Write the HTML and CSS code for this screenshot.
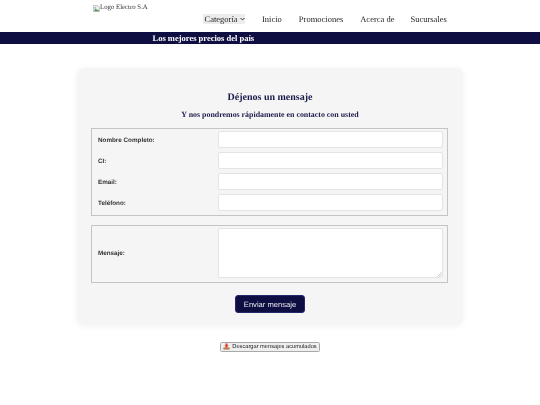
FILE: index.html
```html
<!DOCTYPE html>
<html lang="es">
<head>
<meta charset="utf-8">
<title>Contacto</title>
<link rel="stylesheet" href="styles.css">
</head>
<body>
<div class="page">
<header class="top">
  <div class="logo">
    <svg class="broken" viewBox="0 0 8 8" width="7" height="7"><path d="M.5.5h5l2 2v5h-7z" fill="#e8eef0" stroke="#a0a0a0" stroke-width=".6"/><path d="M1 7l2-3 2 2 1-1 1 2z" fill="#4f9a4a"/><path d="M1 3.500l1.500-1.500 1 1-1 1.500z" fill="#8fb8e0"/></svg><span>Logo Electro S.A</span>
  </div>
  <nav class="nav">
    <span class="cat">Categoría <svg class="chev" viewBox="0 0 8 6" width="5" height="4"><path d="M1 1.500l3 3 3-3" fill="none" stroke="#222" stroke-width="1.500"/></svg></span>
    <a>Inicio</a>
    <a>Promociones</a>
    <a>Acerca de</a>
    <a>Sucursales</a>
  </nav>
</header>
<div class="banner"><span>Los mejores precios del país</span></div>
<main class="card">
  <h2>Déjenos un mensaje</h2>
  <h3>Y nos pondremos rápidamente en contacto con usted</h3>
  <fieldset class="group">
    <div class="row"><label>Nombre Completo:</label><div class="field"></div></div>
    <div class="row"><label>CI:</label><div class="field"></div></div>
    <div class="row"><label>Email:</label><div class="field"></div></div>
    <div class="row"><label>Teléfono:</label><div class="field"></div></div>
  </fieldset>
  <fieldset class="group second">
    <div class="row"><label>Mensaje:</label><div class="field area"><svg class="grip" viewBox="0 0 6 6" width="5" height="5"><path d="M5.500.5l-5 5M5.500 3l-2.500 2.500" stroke="#999" stroke-width=".7"/></svg></div></div>
  </fieldset>
  <div class="send-wrap"><button class="send">Enviar mensaje</button></div>
</main>
<div class="dl-wrap">
  <button class="dl"><svg class="inbox" viewBox="0 0 8 8" width="7" height="7"><path d="M.5 5h7v2.500h-7z" fill="#b9784a"/><path d="M2.800.5h2.400v2.300h1.300L4 5.500 1.500 2.800h1.300z" fill="#d9432f"/></svg><span class="dl-text">Descargar mensajes acumulados</span></button>
</div>
</div>
</body>
</html>
```
FILE: styles.css
```css
* { box-sizing: border-box; }
html, body { margin: 0; padding: 0; background: #fff; }
body { width: 540px; height: 405px; overflow: hidden; }
.page { width: 540px; height: 405px; font-family: "Liberation Serif", serif; color: #222; text-rendering: geometricPrecision; transform: translateZ(0); will-change: transform; }
.top { height: 32px; padding-left: 93px; display: flex; }
.logo { font-size: 6.800px; line-height: 8px; height: 8px; margin-top: 4px; color: #333; display: flex; align-items: center; width: 110px; flex: none; white-space: nowrap; }
.broken { flex: none; }
.nav { display: flex; align-items: center; height: 10px; margin-top: 14px; font-size: 8.500px; color: #222; white-space: nowrap; }
.nav a { margin-left: 17px; }
.nav a:last-child { margin-left: 16px; }
.cat { background: #ececec; height: 10px; line-height: 10px; padding: 0 1px 0 1.500px; width: 42px; display: inline-flex; align-items: center; gap: 2px; }
.chev { flex: none; }
.banner { height: 12px; background: #0e0e42; color: #fff; font-weight: bold; font-size: 8.500px; line-height: 12px; padding-left: 152.500px; white-space: nowrap; }
.card { width: 386px; height: 257px; margin: 24px 0 0 77px; background: #f5f5f5; border-radius: 7px; box-shadow: 0 1px 6px rgba(0,0,0,.06); padding: 23px 14px 0; color: #1a1a4b; }
h2 { margin: 0; font-size: 10px; line-height: 13px; text-align: center; font-weight: bold; }
h3 { margin: 6px 0 0; font-size: 7.900px; line-height: 10px; text-align: center; font-weight: bold; }
.group { border: 1px solid #c4c4c4; border-bottom-width: 1.500px; margin: 8px 0 0; padding: 2px 4.500px 0 6px; width: 357px; height: 88px; display: flex; flex-direction: column; gap: 4px; min-width: 0; }
.second { height: 58px; margin-top: 9px; }
.row { display: flex; align-items: center; justify-content: space-between; }
label { font-family: "Liberation Sans", sans-serif; font-weight: bold; font-size: 6.300px; color: #333; padding-top: 2px; }
.field { width: 225px; height: 17px; background: #fff; border: 1px solid #e4e4e4; border-radius: 2px; flex: none; }
.area { height: 49.500px; position: relative; }
.grip { position: absolute; right: 0; bottom: 0; }
.send-wrap { display: flex; justify-content: center; margin-top: 12px; }
.send { width: 70px; height: 18px; padding: 0; background: #0e0e42; color: #e8e8f0; border: 1px solid #26266a; border-radius: 3px; font-family: "Liberation Sans", sans-serif; font-size: 7.600px; text-rendering: geometricPrecision; }
.dl-wrap { display: flex; justify-content: center; margin-top: 17px; }
.dl { width: 100px; height: 9.500px; padding: 0; background: #efefef; border: 1px solid #a8a8a8; border-radius: 1.500px; color: #222; font-family: "Liberation Sans", sans-serif; font-size: 5.700px; line-height: 7px; display: flex; align-items: center; justify-content: center; gap: 2px; white-space: nowrap; text-rendering: geometricPrecision; }
.dl-text { position: relative; top: .5px; }
.inbox { flex: none; }
```
